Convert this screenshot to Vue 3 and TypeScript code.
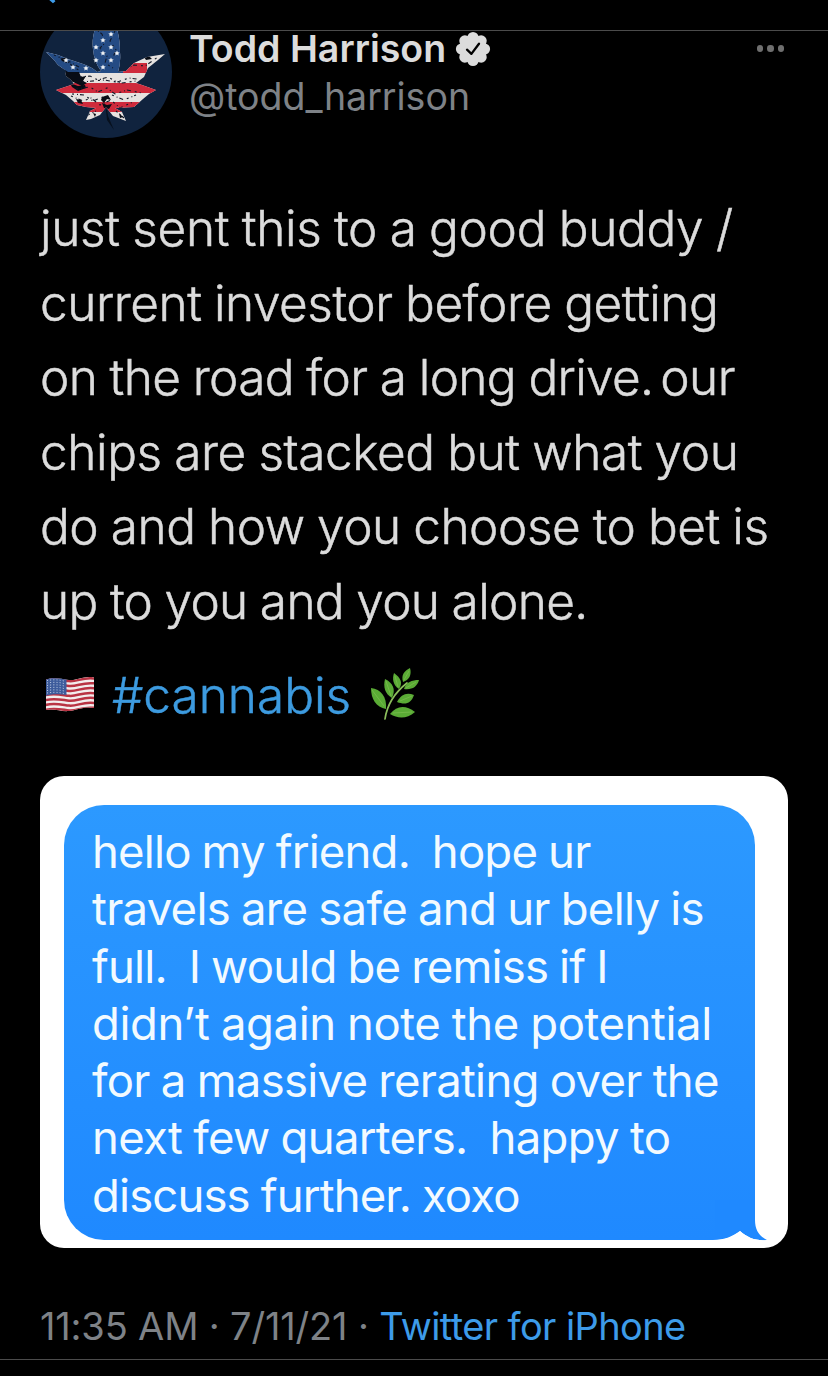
<template>
  <main class="tweet-page">
    <div class="nav-bar">
      <svg class="back" viewBox="0 0 12 4" aria-hidden="true">
        <path d="M1 -3 L6 1.2 L7.5 0" />
      </svg>
    </div>

    <article class="tweet">
      <header class="author">
        <div class="avatar-crop">
          <svg class="avatar" viewBox="0 0 132 132" aria-hidden="true">
            <defs>
              <clipPath id="leaf">
                <path d="M66 2C57 13 51 30 53 43Q54 56 61 65L57 66C52 61 46 59 40 57L28 53 18 49 6 46 14 54 18 59 25 64 26 70 31 74 34 78 16 84 26 89 33 95 37 99 46 101 56 102 50 105 46 114 51 113 60 109 66 101 73 110 86 115 82 106 75 102 94 101 103 93 109 88 116 84 102 79 96 77 104 71 108 62 118 54 125 48 107 51 94 57 86 65 78 66Q81 57 80 46C80 29 76 14 66 2Z" />
              </clipPath>
            </defs>
            <circle cx="66" cy="66" r="66" fill="#10233e" />
            <g clip-path="url(#leaf)">
              <rect width="132" height="132" fill="#e6e2e0" />
              <path d="M0 0H83V67H0Z" fill="#244b84" />
              <path d="M83 57H107V67H83ZM0 77H132V87H0ZM0 96H132V106H0Z" fill="#cf2a3c" />
              <path class="grunge" d="M22 62l6 4 11 0 2 5 5-1-3 5 4 2-5 3-9-4-8-2M30 77l8 3 7-1 1 3-8 3-6-4M62 91l6-2 3 5-4-1-3 4-3-3M62 97l5 2 5-1-3 5-5-1M53 107l3 1-1 3M79 107l4 4-3 1M17 47l4 6 5-2 1 6-5-2M104 51l5-1 3 3-6 1M36 93l5 1 2 4-5-1" />
              <path class="scratches" d="M54 22l8 6 3 9-5 5 7 8-2 7 8 5M75 25l-5 10 6 9-5 12M14 49l16 7 9 5M24 53l10 8 6 4M36 83l14-2 8 5 9-4 8 6 12-4 15 3M31 90l12 5 8-3 9 7 11-5 9 8 13-6M86 63l8-4 11 1 13-9M42 76l22-2 18 3 14-2M40 71l10-1 8 4 10-3 9 5 12-4 8 1M32 88l12 1 9 6 10-4M72 89l12 5 12-5M48 109l8-4M76 105l8 7" />
            </g>
            <g fill="#eef2f6">
              <path v-for="(s, i) in stars" :key="i" :transform="`translate(${s[0]} ${s[1]}) scale(.85)`" d="M0-3L1-.9 3.200-.7 1.500.8 2 3 0 1.800-2 3-1.500.8-3.200-.7-1-.9Z" />
            </g>
            <path d="M67 103l1 7 6 14-7-10-1-10Z" fill="#07101d" />
          </svg>
        </div>

        <div class="names">
          <div class="name">
            <span class="full-name">Todd Harrison</span>
            <svg class="verified" viewBox="0 0 36 36" aria-hidden="true">
              <g fill="#dcdcdc">
                <circle cx="18" cy="18" r="14" />
                <circle v-for="a in 8" :key="a" cx="18" cy="6.500" r="5.600" :transform="`rotate(${a * 45} 18 18)`" />
              </g>
              <path d="M12 18.700l4.400 4.200 7.600-10.200" fill="none" stroke="#000" stroke-width="2.300" stroke-linecap="round" stroke-linejoin="round" />
            </svg>
          </div>
          <div class="handle">@todd_harrison</div>
        </div>

        <div class="more"><i></i><i></i><i></i></div>
      </header>

      <div class="body">
        <div v-for="line in tweetLines" :key="line.text" class="body-line">
          <span :style="lineStyle(line)">{{ line.text }}</span>
          <span v-if="line.rest" class="rest">{{ line.rest }}</span>
        </div>
      </div>

      <div class="tags">
        <svg class="flag" viewBox="0 0 50 36" aria-hidden="true">
          <defs>
            <clipPath id="wave">
              <path d="M1 3.500C9 1 16 3 24 4S38-.5 49 1.500V32C39 30 32 34 24 35S9 32 1 34Z" />
            </clipPath>
          </defs>
          <g clip-path="url(#wave)">
            <rect width="50" height="36" fill="#f2eded" />
            <path v-for="n in 7" :key="n" :transform="`translate(0 ${(n - 1) * 4.9})`" d="M0 4.600C9 2.100 16 4.100 24 5.100S38 .6 50 2.600" fill="none" stroke="#b93343" stroke-width="2.500" />
            <path d="M0 0H21.500V19C14 18 8 18 0 20Z" fill="#3e5c9c" />
            <path v-for="n in 6" :key="'s' + n" :transform="`translate(0 ${n * 2.5 + 2})`" d="M2 0C8-1 14-1 21 1" fill="none" stroke="#c5d2e8" stroke-width="1" stroke-dasharray="1 2.200" />
          </g>
        </svg>
        <span class="hashtag">#cannabis</span>
        <svg class="herb" viewBox="0 0 50 54" aria-hidden="true">
          <path d="M15 52C17 38 23 27 37 16" fill="none" stroke="#8bbd5b" stroke-width="1.700" stroke-linecap="round" />
          <g fill="#5aab35">
            <path d="M1 21C11 22 17 30 16 42C6 40 1 32 1 21Z" />
            <path d="M15 12C23 16 26 22 22 31C15 27 13 20 15 12Z" />
            <path d="M24 6C31 11 33 16 29 22C23 18 22 12 24 6Z" />
            <path d="M40 1C42 8 39 13 33 15C31 8 34 4 40 1Z" />
            <path d="M49 13C47 20 42 23 34 22C36 15 42 13 49 13Z" />
            <path d="M44 28C41 37 35 38 27 35C31 27 37 25 44 28Z" />
            <path d="M45 45C37 52 28 52 20 47C27 38 36 38 45 45Z" />
          </g>
          <path d="M2 23L14 39M16 14L21 29M25 9L28 20M39 4L34 13M46 15L36 21M42 29L30 34M42 45L23 46" fill="none" stroke="#7dbd50" stroke-width=".7" />
        </svg>
      </div>

      <div class="attachment">
        <div class="bubble">
          <div v-for="line in messageLines" :key="line.text" class="message-line">
            <span :style="lineStyle(line)">{{ line.text }}</span>
          </div>
          <svg class="tail" viewBox="0 0 92 42" aria-hidden="true">
            <path d="M40 0H80V20C80 30 84 36 92 40C81 41 73 38 65 31C58 36 50 40 40 40Z" fill="#1f89ff" />
            <path d="M38 40C50 40 58 36 65 31C73 38 81 41 92 40V42H38Z" fill="#fff" />
          </svg>
        </div>
      </div>

      <footer class="meta">
        <span class="stamp">11:35 AM · 7/11/21 · </span><span class="source">Twitter for iPhone</span>
      </footer>
    </article>
  </main>
</template>

<script setup lang="ts">
interface Line {
  text: string
  // letter-spacing in px
  tracking: number
  // word-spacing in px
  gap: number
  // closing word set tight against the full stop
  rest?: string
}

const tweetLines: Line[] = [
  { text: 'just sent this to a good buddy /', tracking: -0.33, gap: -1 },
  { text: 'current investor before getting', tracking: -0.45, gap: -1 },
  { text: 'on the road for a long drive.', tracking: -0.66, gap: -0.8, rest: 'our' },
  { text: 'chips are stacked but what you', tracking: -0.4, gap: -1 },
  { text: 'do and how you choose to bet is', tracking: -0.45, gap: -1 },
  { text: 'up to you and you alone.', tracking: -0.66, gap: -1 }
]

const messageLines: Line[] = [
  { text: 'hello my friend.  hope ur', tracking: -0.83, gap: -1 },
  { text: 'travels are safe and ur belly is', tracking: -0.74, gap: -1 },
  { text: 'full.  I would be remiss if I', tracking: -0.82, gap: -1 },
  { text: 'didn’t again note the potential', tracking: -0.43, gap: -1 },
  { text: 'for a massive rerating over the', tracking: -0.73, gap: -1 },
  { text: 'next few quarters.  happy to', tracking: -0.72, gap: -1 },
  { text: 'discuss further. xoxo', tracking: -0.87, gap: -1 }
]

const lineStyle = (line: Line) => ({
  letterSpacing: `${line.tracking}px`,
  wordSpacing: `${line.gap}px`
})

// star centres inside the avatar leaf
const stars: [number, number][] = [
  [71, 28], [63, 34], [56, 41], [71, 41], [63, 47], [77, 47],
  [56, 54], [71, 54], [63, 61], [26, 54], [33, 61], [46, 62]
]
</script>

<style>
body {
  margin: 0;
  background: #000;
}
</style>

<style scoped>
.tweet-page {
  width: 828px;
  height: 1376px;
  overflow: hidden;
  background: #000;
  color: #dcdcdc;
  font-family: Inter, "Liberation Sans", sans-serif;
}

.nav-bar {
  height: 30px;
  border-bottom: 1px solid #4b4b4b;
}

.back {
  display: block;
  width: 12px;
  height: 4px;
  margin-left: 47px;
}

.back path {
  fill: none;
  stroke: #3d9be9;
  stroke-width: 3;
}

.tweet {
  display: flow-root;
  height: 1329px;
  box-sizing: border-box;
  padding: 0 40px;
  border-bottom: 1px solid #4b4b4b;
}

.author {
  display: flex;
  height: 107px;
}

.avatar-crop {
  display: flex;
  flex: none;
  align-items: flex-end;
  width: 132px;
  height: 107px;
  overflow: hidden;
}

.avatar {
  flex: none;
  width: 132px;
  height: 132px;
}

.grunge {
  fill: #080c15;
}

.scratches {
  fill: none;
  stroke: #111827;
  stroke-width: 1.1;
  stroke-dasharray: 2 3 1 2 4 4;
}

.names {
  margin-left: 17px;
  white-space: nowrap;
}

.name {
  display: flex;
  align-items: center;
  height: 35px;
}

.full-name {
  font-size: 37.5px;
  font-weight: 600;
  line-height: 35px;
}

.verified {
  width: 36px;
  height: 36px;
  margin-left: 9px;
}

.handle {
  margin-top: 7px;
  color: #7e8287;
  font-size: 37.5px;
  line-height: 48px;
}

.more {
  display: flex;
  gap: 4px;
  margin: 14px 4px 0 auto;
}

.more i {
  width: 6.5px;
  height: 6.5px;
  border-radius: 50%;
  background: #6f6f6f;
}

.body {
  margin-top: 53px;
  font-size: 49.5px;
  font-weight: 300;
  line-height: 74.5px;
  white-space: pre;
  -webkit-text-stroke: 0.5px currentColor;
}

.body-line {
  display: flex;
  height: 74.5px;
}

.rest {
  margin-left: 7px;
  letter-spacing: -0.6px;
}

.tags {
  display: flex;
  height: 70px;
  margin-top: 21px;
  align-items: center;
}

.flag {
  width: 50px;
  height: 36px;
  margin-left: 5px;
}

.hashtag {
  width: 238px;
  margin-left: 17px;
  padding-top: 2px;
  color: #3d9be0;
  font-size: 49.5px;
  font-weight: 300;
  -webkit-text-stroke: 0.5px currentColor;
}

.herb {
  width: 50px;
  height: 54px;
  margin-left: 20px;
}

.attachment {
  height: 472px;
  box-sizing: border-box;
  margin-top: 47px;
  padding: 29px 33px 0 24px;
  border-radius: 24px;
  background: #fff;
}

.bubble {
  position: relative;
  height: 435px;
  box-sizing: border-box;
  padding: 18px 28px 0;
  border-radius: 40px;
  background: linear-gradient(#2c99ff, #1f89ff);
  color: #f2faff;
  font-size: 45.5px;
  line-height: 57.3px;
  white-space: pre;
}

.message-line {
  height: 57.3px;
}

.tail {
  position: absolute;
  right: -12px;
  bottom: -2px;
  width: 92px;
  height: 42px;
}

.meta {
  margin-top: 53px;
  color: #7e8287;
  font-size: 38px;
  line-height: 50px;
  white-space: pre;
}

.stamp {
  letter-spacing: -0.17px;
}

.source {
  color: #3d9be9;
  letter-spacing: -0.6px;
}
</style>
